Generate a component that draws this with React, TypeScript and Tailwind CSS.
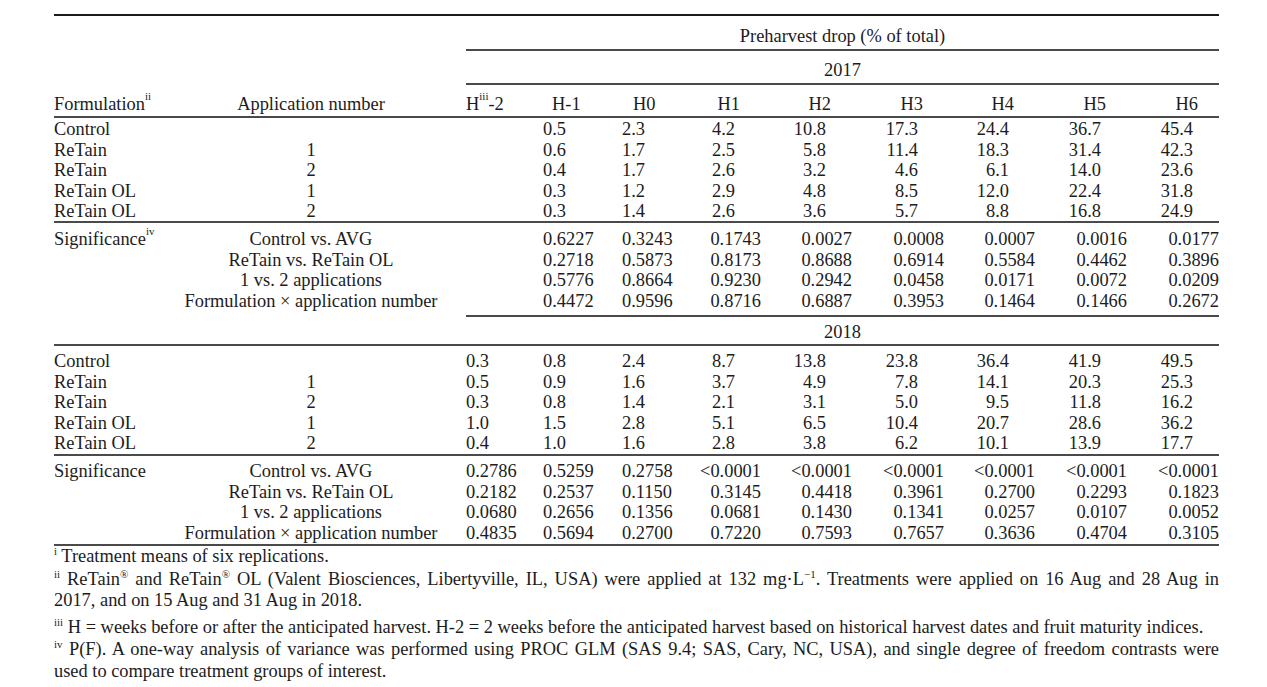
import type { ReactNode } from "react"

type Kind = "head" | "data" | "sig"

type Row = {
  label: ReactNode
  middle: ReactNode
  values: string[]
}

const data2017: Row[] = [
  { label: "Control", middle: "", values: ["", "0.5", "2.3", "4.2", "10.8", "17.3", "24.4", "36.7", "45.4"] },
  { label: "ReTain", middle: "1", values: ["", "0.6", "1.7", "2.5", "5.8", "11.4", "18.3", "31.4", "42.3"] },
  { label: "ReTain", middle: "2", values: ["", "0.4", "1.7", "2.6", "3.2", "4.6", "6.1", "14.0", "23.6"] },
  { label: "ReTain OL", middle: "1", values: ["", "0.3", "1.2", "2.9", "4.8", "8.5", "12.0", "22.4", "31.8"] },
  { label: "ReTain OL", middle: "2", values: ["", "0.3", "1.4", "2.6", "3.6", "5.7", "8.8", "16.8", "24.9"] },
]

const data2018: Row[] = [
  { label: "Control", middle: "", values: ["0.3", "0.8", "2.4", "8.7", "13.8", "23.8", "36.4", "41.9", "49.5"] },
  { label: "ReTain", middle: "1", values: ["0.5", "0.9", "1.6", "3.7", "4.9", "7.8", "14.1", "20.3", "25.3"] },
  { label: "ReTain", middle: "2", values: ["0.3", "0.8", "1.4", "2.1", "3.1", "5.0", "9.5", "11.8", "16.2"] },
  { label: "ReTain OL", middle: "1", values: ["1.0", "1.5", "2.8", "5.1", "6.5", "10.4", "20.7", "28.6", "36.2"] },
  { label: "ReTain OL", middle: "2", values: ["0.4", "1.0", "1.6", "2.8", "3.8", "6.2", "10.1", "13.9", "17.7"] },
]

const contrasts = [
  "Control vs. AVG",
  "ReTain vs. ReTain OL",
  "1 vs. 2 applications",
  "Formulation × application number",
]

const sig2017 = [
  ["", "0.6227", "0.3243", "0.1743", "0.0027", "0.0008", "0.0007", "0.0016", "0.0177"],
  ["", "0.2718", "0.5873", "0.8173", "0.8688", "0.6914", "0.5584", "0.4462", "0.3896"],
  ["", "0.5776", "0.8664", "0.9230", "0.2942", "0.0458", "0.0171", "0.0072", "0.0209"],
  ["", "0.4472", "0.9596", "0.8716", "0.6887", "0.3953", "0.1464", "0.1466", "0.2672"],
]

const sig2018 = [
  ["0.2786", "0.5259", "0.2758", "<0.0001", "<0.0001", "<0.0001", "<0.0001", "<0.0001", "<0.0001"],
  ["0.2182", "0.2537", "0.1150", "0.3145", "0.4418", "0.3961", "0.2700", "0.2293", "0.1823"],
  ["0.0680", "0.2656", "0.1356", "0.0681", "0.1430", "0.1341", "0.0257", "0.0107", "0.0052"],
  ["0.4835", "0.5694", "0.2700", "0.7220", "0.7593", "0.7657", "0.3636", "0.4704", "0.3105"],
]

const TSup = ({ children }: { children: ReactNode }) => (
  <sup className="top-[-10px] text-[11px]">{children}</sup>
)

const FSup = ({ children }: { children: ReactNode }) => (
  <sup className="top-[-7px] text-[11px]">{children}</sup>
)

const headers: ReactNode[] = [
  <>
    H<TSup>iii</TSup>-2
  </>,
  "H-1",
  "H0",
  "H1",
  "H2",
  "H3",
  "H4",
  "H5",
  "H6",
]

const gridCols =
  "grid grid-cols-[126px_286px_77px_77px_77px_64px_91px_92px_91px_92px_92px]"

function cellClass(index: number, kind: Kind) {
  if (index === 0) return "text-left"
  if (index === 1) return kind === "head" ? "text-left pl-[9px]" : "text-left"
  if (index === 2) return kind === "head" ? "text-left pl-[13px]" : "text-left pl-[2px]"
  if (kind === "head") return "text-right pr-[21px]"
  if (kind === "data") return "text-right pr-[26px]"
  return "text-right"
}

function TableRow({ label, middle, values, kind }: Row & { kind: Kind }) {
  return (
    <div className={`${gridCols} h-[20.5px] leading-[20.5px]`}>
      <div className="whitespace-nowrap">{label}</div>
      <div className="whitespace-nowrap pr-[24px] text-center">{middle}</div>
      {values.map((value, index) => (
        <div key={index} className={`whitespace-nowrap ${cellClass(index, kind)}`}>
          {value}
        </div>
      ))}
    </div>
  )
}

const Rule = () => <div className="h-[2px] bg-[#4a4a4a]" />
const SpanRule = () => <div className="ml-[412px] h-[2px] bg-[#4a4a4a]" />

export default function App() {
  return (
    <div className="min-h-[687px] w-[1267px] bg-white font-['Liberation_Serif','Times_New_Roman',serif] text-[#1c1c1c]">
      <div className="ml-[54px] w-[1165px] pt-[14px] text-[18.4px]">
        <div className="h-[2px] bg-[#1a1a1a]" />

        <div className="ml-[412px] h-[33px] pt-[10px] text-center leading-[20.5px]">
          Preharvest drop (% of total)
        </div>
        <SpanRule />

        <div className="ml-[412px] h-[32px] pt-[9px] text-center leading-[20.5px]">2017</div>
        <SpanRule />

        <div className="h-[31px] pt-[9px]">
          <TableRow
            kind="head"
            label={
              <>
                Formulation<TSup>ii</TSup>
              </>
            }
            middle="Application number"
            values={[]}
          />
          <div className={`${gridCols} -mt-[20.5px] h-[20.5px] leading-[20.5px]`}>
            <div />
            <div />
            {headers.map((h, index) => (
              <div key={index} className={`whitespace-nowrap ${cellClass(index, "head")}`}>
                {h}
              </div>
            ))}
          </div>
        </div>
        <Rule />

        <div className="h-[103px] pt-[1px]">
          {data2017.map((row, i) => (
            <TableRow key={i} kind="data" {...row} />
          ))}
        </div>
        <Rule />

        <div className="h-[92px] pt-[6px]">
          {contrasts.map((c, i) => (
            <TableRow
              key={c}
              kind="sig"
              label={
                i === 0 ? (
                  <>
                    Significance<TSup>iv</TSup>
                  </>
                ) : (
                  ""
                )
              }
              middle={c}
              values={sig2017[i]}
            />
          ))}
        </div>
        <SpanRule />

        <div className="ml-[412px] h-[27px] pt-[5px] text-center leading-[20.5px]">2018</div>
        <Rule />

        <div className="h-[108px] pt-[5px]">
          {data2018.map((row, i) => (
            <TableRow key={i} kind="data" {...row} />
          ))}
        </div>
        <Rule />

        <div className="h-[88px] pt-[5px]">
          {contrasts.map((c, i) => (
            <TableRow
              key={c}
              kind="sig"
              label={i === 0 ? "Significance" : ""}
              middle={c}
              values={sig2018[i]}
            />
          ))}
        </div>
        <Rule />

        <div className="leading-[21.5px]">
          <p>
            <FSup>i</FSup> Treatment means of six replications.
          </p>
          <p className="mt-[1px] text-justify [text-align-last:justify]">
            <FSup>ii</FSup> ReTain<FSup>®</FSup> and ReTain<FSup>®</FSup> OL (Valent Biosciences, Libertyville, IL,
            USA) were applied at 132 mg·L<FSup>−1</FSup>. Treatments were applied on 16 Aug and 28 Aug in
          </p>
          <p>2017, and on 15 Aug and 31 Aug in 2018.</p>
          <p className="mt-[5px]">
            <FSup>iii</FSup> H = weeks before or after the anticipated harvest. H-2 = 2 weeks before the
            anticipated harvest based on historical harvest dates and fruit maturity indices.
          </p>
          <p className="text-justify leading-[22px] [text-align-last:justify]">
            <FSup>iv</FSup> P(F). A one-way analysis of variance was performed using PROC GLM (SAS 9.4; SAS, Cary,
            NC, USA), and single degree of freedom contrasts were
          </p>
          <p className="leading-[22px]">used to compare treatment groups of interest.</p>
        </div>
      </div>
    </div>
  )
}
